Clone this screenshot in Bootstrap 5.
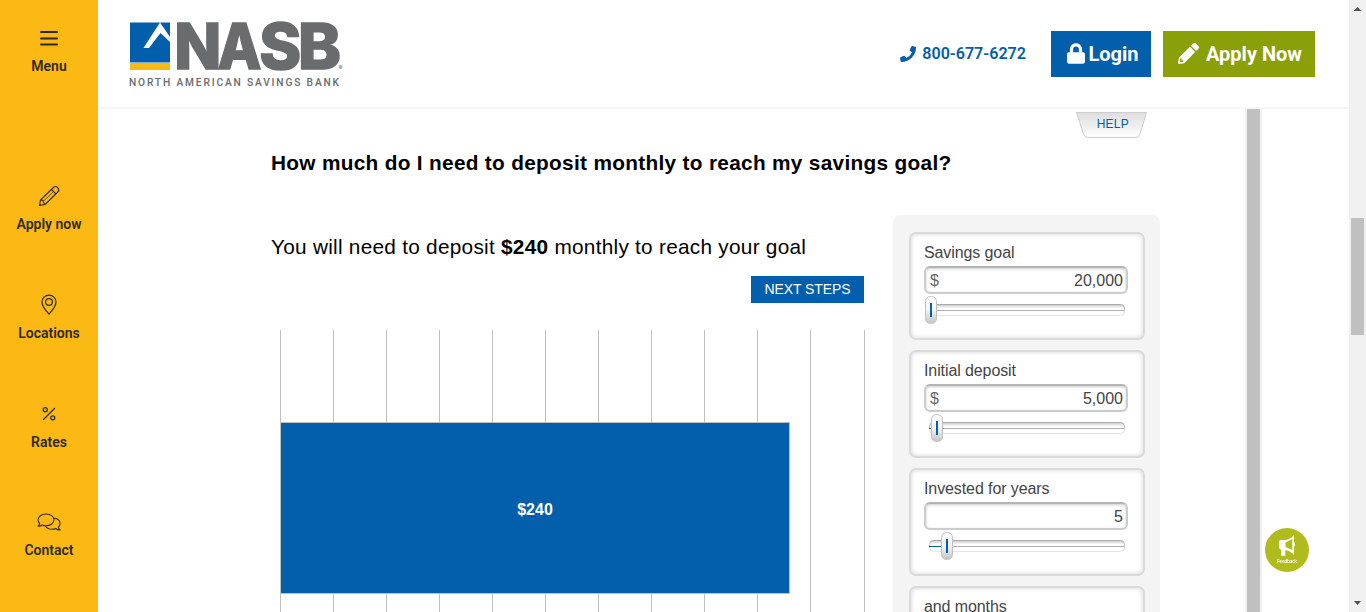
<!DOCTYPE html>
<html lang="en">
<head>
<meta charset="utf-8">
<title>NASB Savings Calculator</title>
<link href="https://cdn.jsdelivr.net/npm/bootstrap@5.3.0/dist/css/bootstrap.min.css" rel="stylesheet">
<style>
  body { font-family: "Liberation Sans", Arial, sans-serif; background: #fff; }
  svg { display: block; flex: none; overflow: visible; }
  .rail { width: 98px; background: #fdb913; padding-top: 12px; }
  .rail a { height: 108.800px; padding-top: 13px; color: #2d2a26; font: 600 14px/18px Roboto, sans-serif; }
  .rail a:first-child { height: 158px; }
  .rail a svg { margin-bottom: 6px; }
  .site-header { height: 109px; border-bottom: 2px solid #f6f6f6; padding: 0 34px 0 29px; }
  .brand-blue { background: #035eab; }
  .phone { color: #035eab; font: 600 16.100px/24px Roboto, sans-serif; margin-right: 25px; }
  .cta { height: 46px; border-radius: 0; color: #fff; font: 700 20px/30px Roboto, sans-serif; padding: 0; }
  .cta-login { width: 100px; margin-right: 12px; padding-left: 4px; gap: 3px; }
  .cta-apply { width: 152px; background: #8b9f08; padding-left: 2px; gap: 7px; }
  .calc { width: 1147px; padding-left: 173px; color: #000; }
  .help { width: 71px; height: 26px; margin: 3px 98px 0 auto; }
  .question { font-size: 20.800px; line-height: 26px; letter-spacing: .31px; margin: 12px 0 39px; font-weight: 700; }
  .results { width: 593px; margin-right: 29px; padding-top: 19px; }
  .answer { font-size: 20.800px; line-height: 26px; letter-spacing: .26px; }
  .next { width: 113px; height: 27px; color: #fff; font-size: 14px; line-height: 24px; letter-spacing: -.1px; margin-top: 16px; border-radius: 0; padding: 0; }
  .chart { height: 320px; margin: 27px 0 0 9px; width: 585px; display: grid; }
  .chart > * { grid-area: 1 / 1; }
  .gridlines span { width: 53px; border-left: 1px solid #c0c0c0; }
  .gridlines span:nth-child(11) { width: 54px; }
  .gridlines span:last-child { width: 1px; }
  .value-bar { width: 510px; height: 172px; margin-top: 92px; border: 1px solid #c0c0c0; color: #fff; font-size: 16px; font-weight: 700; padding-top: 4px; }
  .inputs { width: 267px; background: #f4f4f4; border-radius: 8px; padding: 17px 16px; gap: 10px; height: 520px; }
  .field { width: 236px; height: 108px; flex: none; background: #fff; border: 2px solid #dadada; border-radius: 7px; box-shadow: inset 0 0 5px #d4d4d4; padding: 9px 14px 0 13px; color: #444; font-size: 16px; line-height: 20px; }
  .field label { letter-spacing: -.1px; }
  .amount { width: 204px; height: 28px; margin-top: 3px; border: 2px solid #ccc; border-top-color: #b4b4b4; border-radius: 6px; box-shadow: inset 0 1px 3px #ccc; padding: 3px 3px 0 4px; }
  .amount span:first-child { color: #666; }
  .track { height: 28px; margin-top: 2px; }
  .outer-scroll { width: 17px; background: #f0f0f0; }
  .outer-scroll i { width: 13px; background: #c0c0c0; height: 117px; }
  .inner-scroll { width: 17px; background: #f0f0f0; padding: 0 2px; }
  .inner-scroll i { background: #c0c0c0; width: 13px; }
  .feedback { width: 44px; height: 44px; right: 57px; bottom: 40px; }
</style>
</head>
<body>
<div class="d-flex vh-100 overflow-hidden">
  <nav class="rail d-flex flex-column flex-shrink-0">
    <a class="d-flex flex-column align-items-center text-decoration-none" href="#"><svg width="24" height="26" viewBox="0 0 24 26" stroke="#2d2a26" stroke-width="2" stroke-linecap="round"><path d="M4 7h16M4 13.500h16M4 19.500h16"/></svg>Menu</a>
    <a class="d-flex flex-column align-items-center text-decoration-none" href="#"><svg width="24" height="26" viewBox="0 0 24 26" fill="none" stroke="#2d2a26" stroke-width="1.1" stroke-linejoin="round"><path d="M2.500 22.500 3.500 17 16.500 4.500Q18.500 2.500 20.500 4.500L21 5Q22.800 7 20.800 9L8 21.500ZM3.500 17 6 17.300 6.400 19.200 8 21.500M14.500 6.500 18.800 10.800M2.600 21l1.500 1.200"/><path d="M6.300 18.300 16.800 8.300" stroke-width=".7"/></svg>Apply now</a>
    <a class="d-flex flex-column align-items-center text-decoration-none" href="#"><svg width="24" height="26" viewBox="0 0 24 26" fill="none" stroke="#2d2a26" stroke-width="1.2"><path d="M12 22.200Q5 14.500 5 10a7 6.800 0 0 1 14 0Q19 14.500 12 22.200Z"/><circle cx="12" cy="10" r="3.400"/></svg>Locations</a>
    <a class="d-flex flex-column align-items-center text-decoration-none" href="#"><svg width="24" height="26" viewBox="0 0 24 26" fill="none" stroke="#2d2a26" stroke-width="1.300" stroke-linecap="round"><path d="M6.500 18.500 17.500 7.500"/><circle cx="8.200" cy="8.700" r="2"/><circle cx="15.800" cy="16.800" r="2"/></svg>Rates</a>
    <a class="d-flex flex-column align-items-center text-decoration-none" href="#"><svg width="24" height="26" viewBox="0 0 24 26" fill="none" stroke="#2d2a26" stroke-width="1.100" stroke-linejoin="round"><path d="M1 17.200Q3 15.500 2.700 14.500Q1 12.800 1 11C1 7.500 4.500 5 9 5s8 2.500 8 5.800-3.500 6-8 6q-2 0-3.800-.8Q3.500 17.500 1 17.200ZM17 9.200c3.500.3 6 2.500 6 5.500q0 1.800-1.600 3.500.2 1.500 1.800 2.800-2.700.2-4.500-1.500-1.500.8-3.500.8c-3.200 0-5.700-1.500-7-3.600"/></svg>Contact</a>
  </nav>

  <div class="flex-grow-1 d-flex flex-column">
    <header class="site-header d-flex align-items-center flex-shrink-0">
      <svg class="me-auto" width="220" height="76" viewBox="127 16 220 76" font-family="Inter, sans-serif" fill="#6a6b6d">
        <path fill="#005eab" d="M130 22.500h40v40h-40z"/><path fill="#fdb913" d="M130 63h40v7h-40z"/>
        <path fill="#fff" d="M160 22.500 170 37v5L160.500 33 149 48h-5.500Z"/>
        <text y="69.200" font-size="63" font-weight="800" stroke="#6a6b6d" stroke-width="1.500"><tspan x="174.200" textLength="47" lengthAdjust="spacingAndGlyphs">N</tspan><tspan x="217.500" textLength="44" lengthAdjust="spacingAndGlyphs">A</tspan><tspan x="259.300" textLength="42" lengthAdjust="spacingAndGlyphs">S</tspan><tspan x="298" textLength="43" lengthAdjust="spacingAndGlyphs">B</tspan></text>
        <text x="338.500" y="70" font-size="6">®</text>
        <text x="129" y="86" font-size="10.200" font-weight="500" font-family="Roboto, sans-serif" textLength="210" lengthAdjust="spacing">NORTH AMERICAN SAVINGS BANK</text>
      </svg>
      <div class="phone d-flex align-items-center"><svg width="16" height="16" viewBox="0 0 512 512" fill="#035eab" style="margin-right:6px"><path d="M493 25 389 1c-11-3-23 3-28 14l-48 112c-4 10-1 22 7 28l61 50a371 371 0 0 1-177 177l-50-61c-7-8-18-11-28-7L14 362C4 367-2 378 1 389l24 104c2 11 12 19 23 19 256 0 464-207 464-464 0-11-8-21-19-23z"/></svg>800-677-6272</div>
      <a class="btn cta cta-login brand-blue d-flex align-items-center justify-content-center" href="#"><svg width="18" height="21" viewBox="0 0 448 512" fill="#fff"><path d="M400 224h-24v-72C376 68 308 0 224 0S72 68 72 152v72H48c-27 0-48 22-48 48v192c0 27 21 48 48 48h352c27 0 48-21 48-48V272c0-26-21-48-48-48zm-104 0H152v-72a72 72 0 0 1 144 0z"/></svg>Login</a>
      <a class="btn cta cta-apply d-flex align-items-center justify-content-center" href="#"><svg width="21" height="21" viewBox="0 0 512 512" fill="#fff"><path d="m498 142-46 46c-5 5-13 5-17 0L324 77c-5-5-5-12 0-17l46-46c19-19 49-19 68 0l60 60c19 19 19 49 0 68zM284 100 22 362 0 484c-3 16 12 31 28 28l122-21 262-263c5-4 5-12 0-17L301 100c-5-5-12-5-17 0zM88 424h48v36l-64 12-32-32 12-64h36z" fill-rule="evenodd"/></svg>Apply Now</a>
    </header>

    <main class="d-flex flex-grow-1 overflow-hidden" style="min-height:0">
      <section class="calc">
        <div class="help"><svg width="71" height="26" viewBox="0 0 71 26"><defs><linearGradient id="tab" x2="0" y2="1"><stop stop-color="#dedcdc"/><stop offset="1" stop-color="#fff"/></linearGradient></defs><path d="M.5.500h70L64 22q-1 3.500-4 3.500H12Q9 25.500 7.500 22Z" fill="url(#tab)" stroke="#ccc"/><text x="20.700" y="16" font-size="12" textLength="32" fill="#035eab" font-family="Liberation Sans, sans-serif">HELP</text></svg></div>
        <h1 class="question">How much do I need to deposit monthly to reach my savings goal?</h1>
        <div class="d-flex align-items-start">
          <div class="results d-flex flex-column">
            <div class="answer">You will need to deposit <b>$240</b> monthly to reach your goal</div>
            <a class="btn next brand-blue align-self-end" href="#">NEXT STEPS</a>
            <div class="chart">
              <div class="gridlines d-flex"><span></span><span></span><span></span><span></span><span></span><span></span><span></span><span></span><span></span><span></span><span></span><span></span></div>
              <div class="value-bar brand-blue d-flex align-items-center justify-content-center">$240</div>
            </div>
          </div>
          <div class="inputs d-flex flex-column">
            <div class="field"><label>Savings goal</label><div class="amount d-flex justify-content-between"><span>$</span><span>20,000</span></div><svg class="track" width="204" height="28"><use href="#rail"/><use href="#knob" x="1"/></svg></div>
            <div class="field"><label>Initial deposit</label><div class="amount d-flex justify-content-between"><span>$</span><span>5,000</span></div><svg class="track" width="204" height="28"><use href="#rail"/><path d="M5 14.500h5" stroke="#035eab"/><use href="#knob" x="7"/></svg></div>
            <div class="field"><label>Invested for years</label><div class="amount d-flex justify-content-between"><span></span><span>5</span></div><svg class="track" width="204" height="28"><use href="#rail"/><path d="M5 14.500h14" stroke="#035eab"/><use href="#knob" x="17"/></svg></div>
            <div class="field"><label>and months</label></div>
          </div>
        </div>
      </section>
      <div class="inner-scroll"><i class="d-block h-100"></i></div>
    </main>
  </div>

  <div class="outer-scroll d-flex flex-column align-items-center flex-shrink-0">
    <svg width="17" height="218"><path d="M4.500 11 8.500 7l4 4z" fill="#505050"/></svg>
    <i></i>
    <svg class="mt-auto" width="17" height="17"><path d="M5 6h7l-3.500 4z" fill="#505050"/></svg>
  </div>
</div>

<a class="feedback position-fixed" href="#"><svg width="44" height="44"><circle cx="22" cy="22" r="22" fill="#b0bb1e"/><path d="M14 13.500Q14 12 15.500 12H21Q26 11 29 7V27Q25.500 23 21 22.300H20.300V27.800H16V21.500Q14 21 14 19.500Z" fill="#fff"/><path d="M20.500 14.500 27.300 11V22L20.500 19Z" fill="#b0bb1e"/><path d="M29 13.800q2 2.500 0 5" fill="#fff"/><text x="22" y="34.700" font-size="5" text-anchor="middle" textLength="20" font-weight="600" fill="#fff" font-family="Open Sans, sans-serif">Feedback</text></svg></a>

<svg class="position-absolute" width="0" height="0">
  <defs>
    <linearGradient id="groove" x2="0" y2="1"><stop stop-color="#c4c4c4"/><stop offset=".35" stop-color="#fff"/></linearGradient>
    <linearGradient id="grip" x2="0" y2="1"><stop stop-color="#fff"/><stop offset=".5" stop-color="#f4f4f4"/><stop offset="1" stop-color="#c4c4c4"/></linearGradient>
    <linearGradient id="edge" x2="0" y2="1"><stop stop-color="#aaa"/><stop offset="1" stop-color="#e4e4e4"/></linearGradient>
    <g id="rail"><rect x="5.500" y="8.500" width="195" height="11" rx="4" fill="url(#groove)" stroke="url(#edge)"/><path d="M5 14.500h195" stroke="#b0b0b0"/></g>
    <g id="knob"><rect x=".5" y=".5" width="11" height="27" rx="5" fill="url(#grip)" stroke="#c0c0c0"/><path d="M6 7v14" stroke="#035eab" stroke-width="2"/></g>
  </defs>
</svg>
<script src="https://cdn.jsdelivr.net/npm/bootstrap@5.3.0/dist/js/bootstrap.bundle.min.js"></script>
</body>
</html>
